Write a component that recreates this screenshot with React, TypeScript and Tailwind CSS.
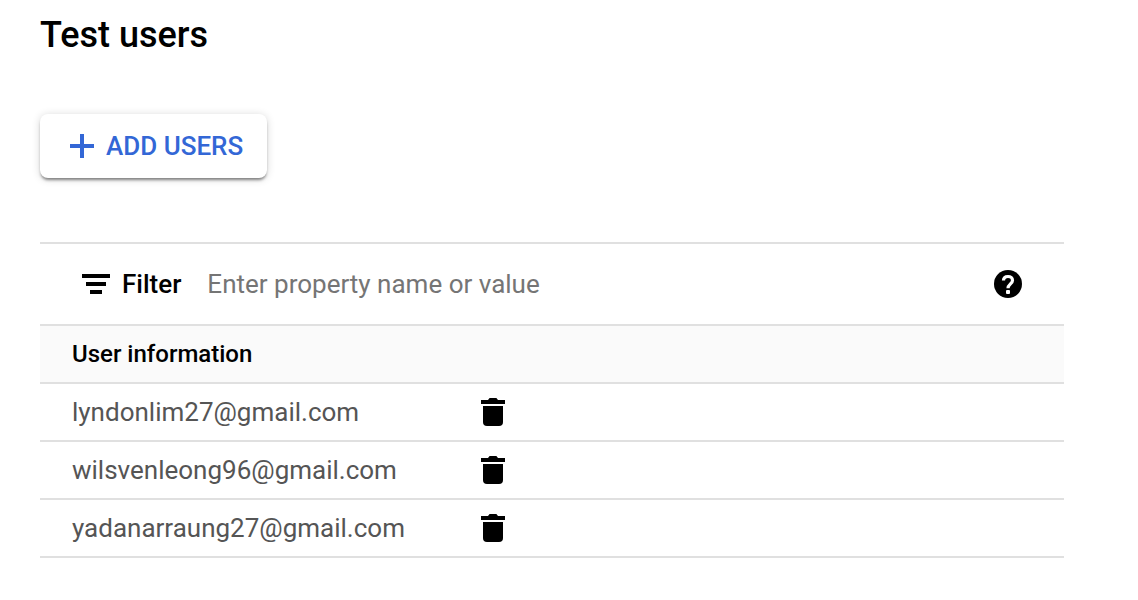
const users: string[] = [
  "lyndonlim27@gmail.com",
  "wilsvenleong96@gmail.com",
  "yadanarraung27@gmail.com",
];

function PlusIcon() {
  return (
    <svg className="size-6 shrink-0" viewBox="0 0 24 24" fill="currentColor" aria-hidden="true">
      <path d="M10 0h4v10h10v4H14v10h-4V14H0v-4h10z" />
    </svg>
  );
}

function FilterIcon() {
  return (
    <svg className="h-5 w-7 shrink-0" viewBox="0 0 28 20" fill="currentColor" aria-hidden="true">
      <path d="M0 0h28v4H0zM4 8h20v4H4zM8 16h12v4H8z" />
    </svg>
  );
}

function HelpIcon() {
  return (
    <svg className="size-7" viewBox="0 0 28 28" aria-hidden="true">
      <circle cx="14" cy="14" r="14" fill="currentColor" />
      <path
        d="M9.5 10.6c0-2.6 1.9-4.1 4.5-4.1s4.5 1.5 4.5 3.9c0 3.3-4.5 3.7-4.5 7.9"
        fill="none"
        stroke="white"
        strokeWidth="3.2"
      />
      <rect x="12" y="20" width="4" height="4" rx="1" fill="white" />
    </svg>
  );
}

function TrashIcon() {
  return (
    <svg className="h-7 w-6" viewBox="0 0 24 28" fill="currentColor" aria-hidden="true">
      <path d="M0 2h7l1.6-2h6.8L17 2h7v4H0z" />
      <path d="M2 8h20v16a4 4 0 0 1-4 4H6a4 4 0 0 1-4-4z" />
    </svg>
  );
}

export default function App() {
  return (
    <main className="min-h-screen bg-white pt-2 pr-[74px] pb-10 pl-10 font-['Roboto','Liberation_Sans',sans-serif] text-[26px] leading-8 text-black">
      <h1 className="text-4xl leading-[54px] font-medium">Test users</h1>

      <button
        type="button"
        className="mt-[52px] flex h-16 items-center gap-3 rounded-lg bg-white pr-6 pl-[30px] font-medium text-[#3367d6] shadow-[0_3px_3px_-1px_rgba(0,0,0,0.45),0_1px_8px_rgba(0,0,0,0.16)]"
      >
        <PlusIcon />
        ADD USERS
      </button>

      <section className="mt-16 border-t-2 border-[#e0e0e0]">
        <div className="flex h-20 items-center pr-[42px] pl-[42px]">
          <FilterIcon />
          <label htmlFor="filter" className="ml-3 font-medium">
            Filter
          </label>
          <input
            id="filter"
            type="text"
            placeholder="Enter property name or value"
            className="ml-[26px] min-w-0 flex-1 bg-transparent outline-none placeholder:text-[#757575]"
          />
          <button type="button" aria-label="Help">
            <HelpIcon />
          </button>
        </div>

        <table className="w-full border-t-2 border-[#e0e0e0] text-left">
          <thead className="bg-[#fafafa]">
            <tr className="h-[58px] border-b-2 border-[#e0e0e0]">
              <th scope="col" colSpan={2} className="pl-8 text-2xl font-medium">
                User information
              </th>
            </tr>
          </thead>
          <tbody>
            {users.map((email) => (
              <tr key={email} className="h-[58px] border-b-2 border-[#e0e0e0]">
                <td className="w-[441px] pl-8 text-[#555555]">{email}</td>
                <td>
                  <button type="button" aria-label={`Delete ${email}`} className="block">
                    <TrashIcon />
                  </button>
                </td>
              </tr>
            ))}
          </tbody>
        </table>
      </section>
    </main>
  );
}
